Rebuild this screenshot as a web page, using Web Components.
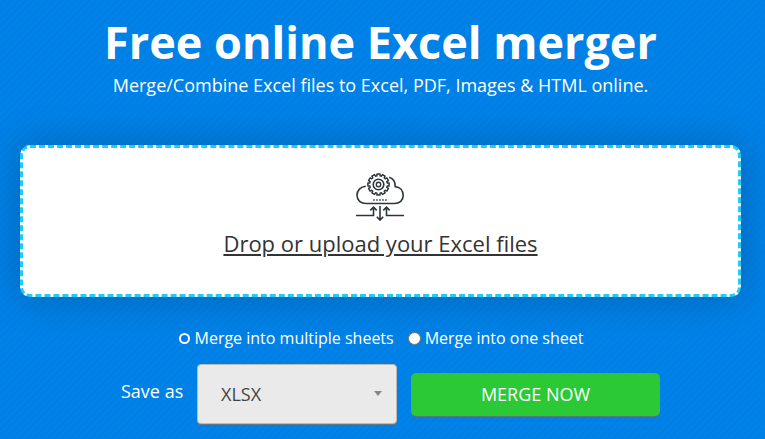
<!DOCTYPE html>
<html lang="en"><head><meta charset="utf-8"><title>Free online Excel merger</title>
<style>body{margin:0;font-family:"Open Sans","Noto Sans",sans-serif;overflow:hidden}</style></head><body>
<merger-page></merger-page>
<script>
const define=(name,html)=>customElements.define(name,class extends HTMLElement{
 constructor(){super();this.attachShadow({mode:'open'}).innerHTML=html}
});
define('page-heading',`<style>:host{display:block;width:761px;text-align:center;color:#fff;height:145px;box-sizing:border-box;padding-top:11px}
h1{font-size:45px;line-height:61px;font-weight:700;margin:0}p{font-size:18px;line-height:25px;margin:1px 0 0}</style>
<h1><slot name="title"></slot></h1><p><slot></slot></p>`);
define('cloud-icon',`<style>:host{display:block;width:50px;height:52px}svg{display:block}</style>
<svg width="50" height="52" viewBox="0 0 50 52" fill="none" stroke="#2d3739" stroke-width="1.6">
<path d="M10.800 16.200C5.500 16.700 2 20.500 2 25.300C2 30.300 6 33.500 11 33.500H39.500C44.700 33.500 48.200 30.300 48.200 25.600C48.200 20.600 45 17 40.200 16.600C40.400 11.500 38 8.300 34.200 7.200"/>
<path id="gear" stroke-linejoin="round" stroke-width="1.500"/><circle cx="23.500" cy="14.500" r="5.300"/><circle cx="23.500" cy="14.500" r="2.200" stroke-width="1.400"/>
<path d="M18.200 30H32" stroke-dasharray="1.500 1.500"/>
<path d="M1 45.500H18.500V37M15.300 40.400L18.500 37.200L21.700 40.400M49 45.500H31.500V37M28.300 40.400L31.500 37.200L34.700 40.400M25 36V50M21.800 46.800L25 50L28.200 46.800"/>
</svg>`);
define('drop-zone',`<style>:host{display:flex;flex-direction:column;align-items:center;box-sizing:border-box;width:721px;height:152px;margin-left:20px;padding:22px 2px 0 0;background:#fff;border:3px dashed #22cbf2;border-radius:10px;box-shadow:0 0 40px rgba(0,0,0,.22)}
a{color:#333;font-size:22px;line-height:30px;font-weight:400;text-decoration:underline;margin:6px 0 0 2px}</style>
<cloud-icon></cloud-icon><a><slot></slot></a>`);
define('radio-choice',`<style>:host{display:flex;align-items:center;gap:4px;color:#fff;font-size:16px;line-height:22px}
i{box-sizing:border-box;width:13px;height:13px;border-radius:50%;background:#fff;border:1px solid #767676}
:host([checked]) i{width:11px;height:11px;margin:1px;background:#0075ff;border:2px solid #fff}</style><i></i><span><slot></slot></span>`);
define('format-select',`<style>:host{display:flex;align-items:center;justify-content:space-between;box-sizing:border-box;width:200px;height:60px;padding:0 14px 0 23px;background:#eaeaea;border:1px solid #bbb;border-radius:4px;box-shadow:0 1px 0 #68767f;color:#444;font-size:18px}
i{border:solid transparent;border-width:5px 4px 0;border-top-color:#888;margin-top:-2px}</style><span><slot></slot></span><i></i>`);
define('merge-button',`<style>:host{display:block;width:249px;height:43px;box-sizing:border-box;border-radius:5px;background:#2bc936;color:#fff;text-align:center;font-size:18px;line-height:43px;box-shadow:0 1px 0 #537b73}</style><slot></slot>`);
define('merger-page',`<style>:host{display:block;width:765px;height:439px;background:repeating-linear-gradient(135deg,#0082e8 0 2.500px,#007ee2 3.500px 4px,#0082e8 5px)}
.choices{display:flex;gap:14px;padding:30px 0 0 177.5px}.actions{display:flex;align-items:center;padding:15px 0 0 121px}
.label{color:#fff;font-size:18px;width:76px;padding-bottom:6px}merge-button{margin-left:14px}</style>
<page-heading><span slot="title">Free online Excel merger</span>Merge/Combine Excel files to Excel, PDF, Images &amp; HTML online.</page-heading>
<drop-zone>Drop or upload your Excel files</drop-zone>
<div class="choices"><radio-choice checked>Merge into multiple sheets</radio-choice><radio-choice>Merge into one sheet</radio-choice></div>
<div class="actions"><span class="label">Save as</span><format-select>XLSX</format-select><merge-button>MERGE NOW</merge-button></div>`);
/* Twelve-tooth outline around the given centre. */
function gearPath(cx,cy){
 let p=[];
 for(let i=0;i<12;i++){for(const [o,r] of [[-.18,8.800],[-.14,10.700],[.14,10.700],[.18,8.800]]){const a=i*Math.PI/6+o;p.push((cx+r*Math.sin(a)).toFixed(2)+' '+(cy-r*Math.cos(a)).toFixed(2))}}
 return 'M'+p.join('L')+'Z';
}
document.querySelector('merger-page').shadowRoot.querySelector('drop-zone').shadowRoot.querySelector('cloud-icon').shadowRoot.querySelector('#gear').setAttribute('d',gearPath(23.5,14.5));
</script></body></html>
